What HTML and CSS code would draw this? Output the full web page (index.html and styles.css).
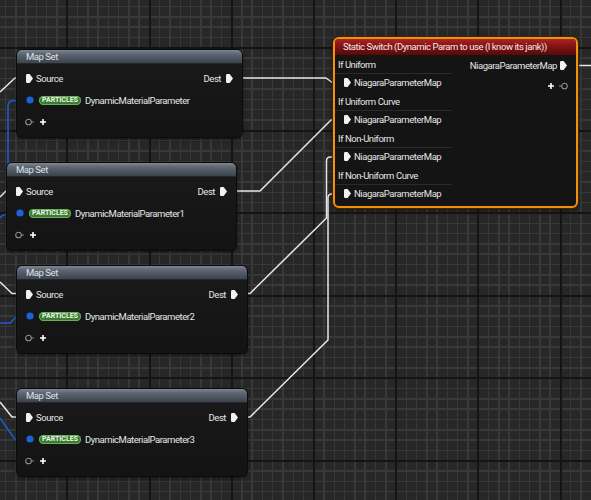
FILE: index.html
```html
<!DOCTYPE html>
<html>
<head>
<meta charset="utf-8">
<title>Niagara Graph</title>
<link rel="stylesheet" href="styles.css">
</head>
<body>
<div class="graph">
  <svg class="wires" width="591" height="500" viewBox="0 0 591 500">
    <path class="wire wire-blue" d="M8 170V106Q8 100.7 13 100.7H27"/>
    <path class="wire wire-blue" d="M0 218Q3 214 8 214H17"/>
    <path class="wire wire-blue" d="M0 323H10L17 316H27"/>
    <path class="wire wire-blue" d="M0 418L15 439.5H27"/>
    <path class="wire wire-exec" d="M0 92L15 78H26"/>
    <path class="wire wire-exec" d="M0 197L6 191H16"/>
    <path class="wire wire-exec" d="M0 282L12 293.5H26"/>
    <path class="wire wire-exec" d="M0 402L12 417H26"/>
    <path class="wire wire-exec" d="M233 78H326L333 83H344"/>
    <path class="wire wire-exec" d="M228 191H260L331 120H344"/>
    <path class="wire wire-exec" d="M237 293.5H250L326.5 218V161Q326.5 157 330.5 157H344"/>
    <path class="wire wire-exec" d="M237 417H250L328 340V198Q328 194 332 194H344"/>
    <path class="wire wire-exec" d="M567 65.5H591"/>
  </svg>

  <div class="node mapset n1">
    <div class="hdr">Map Set</div>
    <div class="body">
      <div class="row">
        <div class="pin"><svg class="ico exec-in" width="7" height="9" viewBox="0 0 7 9"><path d="M0 1.2Q0 0 1.2 0H3.6L7 4.5 3.6 9H1.2Q0 9 0 7.8Z" fill="#f2f2f2"/></svg><span>Source</span></div>
        <div class="pin"><span>Dest</span><svg class="ico exec-out" width="7" height="9" viewBox="0 0 7 9"><path d="M0 1.2Q0 0 1.2 0H3.6L7 4.5 3.6 9H1.2Q0 9 0 7.8Z" fill="#f2f2f2"/></svg></div>
      </div>
      <div class="row">
        <div class="pin"><svg class="ico dot" width="8" height="8" viewBox="0 0 8 8"><circle cx="4" cy="4" r="3.6" fill="#1d62d8"/></svg><span class="badge">PARTICLES</span><span>DynamicMaterialParameter</span></div>
      </div>
      <div class="row">
        <div class="pin"><svg class="ico addpin" width="9" height="8" viewBox="0 0 9 8"><circle cx="3.5" cy="4" r="2.8" fill="none" stroke="#8c8c8c" stroke-width="1.1"/><path d="M6.3 4H9" stroke="#8c8c8c"/></svg><svg class="ico" width="6" height="6" viewBox="0 0 6 6"><path d="M3 0V6M0 3H6" stroke="#fff" stroke-width="1.6"/></svg></div>
      </div>
    </div>
  </div>

  <div class="node mapset n2">
    <div class="hdr">Map Set</div>
    <div class="body">
      <div class="row">
        <div class="pin"><svg class="ico exec-in" width="7" height="9" viewBox="0 0 7 9"><path d="M0 1.2Q0 0 1.2 0H3.6L7 4.5 3.6 9H1.2Q0 9 0 7.8Z" fill="#f2f2f2"/></svg><span>Source</span></div>
        <div class="pin"><span>Dest</span><svg class="ico exec-out" width="7" height="9" viewBox="0 0 7 9"><path d="M0 1.2Q0 0 1.2 0H3.6L7 4.5 3.6 9H1.2Q0 9 0 7.8Z" fill="#f2f2f2"/></svg></div>
      </div>
      <div class="row">
        <div class="pin"><svg class="ico dot" width="8" height="8" viewBox="0 0 8 8"><circle cx="4" cy="4" r="3.6" fill="#1d62d8"/></svg><span class="badge">PARTICLES</span><span>DynamicMaterialParameter1</span></div>
      </div>
      <div class="row">
        <div class="pin"><svg class="ico addpin" width="9" height="8" viewBox="0 0 9 8"><circle cx="3.5" cy="4" r="2.8" fill="none" stroke="#8c8c8c" stroke-width="1.1"/><path d="M6.3 4H9" stroke="#8c8c8c"/></svg><svg class="ico" width="6" height="6" viewBox="0 0 6 6"><path d="M3 0V6M0 3H6" stroke="#fff" stroke-width="1.6"/></svg></div>
      </div>
    </div>
  </div>

  <div class="node mapset n3">
    <div class="hdr">Map Set</div>
    <div class="body">
      <div class="row">
        <div class="pin"><svg class="ico exec-in" width="7" height="9" viewBox="0 0 7 9"><path d="M0 1.2Q0 0 1.2 0H3.6L7 4.5 3.6 9H1.2Q0 9 0 7.8Z" fill="#f2f2f2"/></svg><span>Source</span></div>
        <div class="pin"><span>Dest</span><svg class="ico exec-out" width="7" height="9" viewBox="0 0 7 9"><path d="M0 1.2Q0 0 1.2 0H3.6L7 4.5 3.6 9H1.2Q0 9 0 7.8Z" fill="#f2f2f2"/></svg></div>
      </div>
      <div class="row">
        <div class="pin"><svg class="ico dot" width="8" height="8" viewBox="0 0 8 8"><circle cx="4" cy="4" r="3.6" fill="#1d62d8"/></svg><span class="badge">PARTICLES</span><span>DynamicMaterialParameter2</span></div>
      </div>
      <div class="row">
        <div class="pin"><svg class="ico addpin" width="9" height="8" viewBox="0 0 9 8"><circle cx="3.5" cy="4" r="2.8" fill="none" stroke="#8c8c8c" stroke-width="1.1"/><path d="M6.3 4H9" stroke="#8c8c8c"/></svg><svg class="ico" width="6" height="6" viewBox="0 0 6 6"><path d="M3 0V6M0 3H6" stroke="#fff" stroke-width="1.6"/></svg></div>
      </div>
    </div>
  </div>

  <div class="node mapset n4">
    <div class="hdr">Map Set</div>
    <div class="body">
      <div class="row">
        <div class="pin"><svg class="ico exec-in" width="7" height="9" viewBox="0 0 7 9"><path d="M0 1.2Q0 0 1.2 0H3.6L7 4.5 3.6 9H1.2Q0 9 0 7.8Z" fill="#f2f2f2"/></svg><span>Source</span></div>
        <div class="pin"><span>Dest</span><svg class="ico exec-out" width="7" height="9" viewBox="0 0 7 9"><path d="M0 1.2Q0 0 1.2 0H3.6L7 4.5 3.6 9H1.2Q0 9 0 7.8Z" fill="#f2f2f2"/></svg></div>
      </div>
      <div class="row">
        <div class="pin"><svg class="ico dot" width="8" height="8" viewBox="0 0 8 8"><circle cx="4" cy="4" r="3.6" fill="#1d62d8"/></svg><span class="badge">PARTICLES</span><span>DynamicMaterialParameter3</span></div>
      </div>
      <div class="row">
        <div class="pin"><svg class="ico addpin" width="9" height="8" viewBox="0 0 9 8"><circle cx="3.5" cy="4" r="2.8" fill="none" stroke="#8c8c8c" stroke-width="1.1"/><path d="M6.3 4H9" stroke="#8c8c8c"/></svg><svg class="ico" width="6" height="6" viewBox="0 0 6 6"><path d="M3 0V6M0 3H6" stroke="#fff" stroke-width="1.6"/></svg></div>
      </div>
    </div>
  </div>

  <div class="node switch">
    <div class="sw-hdr">Static Switch (Dynamic Param to use (I know its jank))</div>
    <div class="sw-body">
      <div class="sw-in">
        <div class="cat">If Uniform</div>
        <div class="in-row"><svg class="ico exec-in" width="7" height="9" viewBox="0 0 7 9"><path d="M0 1.2Q0 0 1.2 0H3.6L7 4.5 3.6 9H1.2Q0 9 0 7.8Z" fill="#f2f2f2"/></svg><span>NiagaraParameterMap</span></div>
        <div class="cat">If Uniform Curve</div>
        <div class="in-row"><svg class="ico exec-in" width="7" height="9" viewBox="0 0 7 9"><path d="M0 1.2Q0 0 1.2 0H3.6L7 4.5 3.6 9H1.2Q0 9 0 7.8Z" fill="#f2f2f2"/></svg><span>NiagaraParameterMap</span></div>
        <div class="cat">If Non-Uniform</div>
        <div class="in-row"><svg class="ico exec-in" width="7" height="9" viewBox="0 0 7 9"><path d="M0 1.2Q0 0 1.2 0H3.6L7 4.5 3.6 9H1.2Q0 9 0 7.8Z" fill="#f2f2f2"/></svg><span>NiagaraParameterMap</span></div>
        <div class="cat">If Non-Uniform Curve</div>
        <div class="in-row"><svg class="ico exec-in" width="7" height="9" viewBox="0 0 7 9"><path d="M0 1.2Q0 0 1.2 0H3.6L7 4.5 3.6 9H1.2Q0 9 0 7.8Z" fill="#f2f2f2"/></svg><span>NiagaraParameterMap</span></div>
      </div>
      <div class="sw-out">
        <div class="out-row"><span>NiagaraParameterMap</span><svg class="ico exec-out-sw" width="7" height="9" viewBox="0 0 7 9"><path d="M0 1.2Q0 0 1.2 0H3.6L7 4.5 3.6 9H1.2Q0 9 0 7.8Z" fill="#f2f2f2"/></svg></div>
        <div class="add-row"><svg class="ico" width="6" height="6" viewBox="0 0 6 6"><path d="M3 0V6M0 3H6" stroke="#fff" stroke-width="1.6"/></svg><svg class="ico addpin-out" width="9" height="8" viewBox="0 0 9 8"><path d="M0 4H2.7" stroke="#8c8c8c"/><circle cx="5.5" cy="4" r="2.8" fill="none" stroke="#8c8c8c" stroke-width="1.1"/></svg></div>
      </div>
    </div>
  </div>
</div>
</body>
</html>
```

FILE: styles.css
```css
* { box-sizing: border-box; }

html, body {
  margin: 0;
  padding: 0;
  background: #272727;
}

body {
  font-family: Roboto, "Liberation Sans", sans-serif;
  font-size: 9.5px;
  letter-spacing: -0.45px;
  color: #e6e6e6;
}

.graph {
  position: relative;
  width: 591px;
  height: 500px;
  overflow: hidden;
  background-color: #272727;
  background-image:
    repeating-linear-gradient(90deg, transparent 0 66.5px, #141414 66.5px 68.5px, transparent 68.5px 82.2px),
    repeating-linear-gradient(180deg, transparent 0 47px, #141414 47px 49px, transparent 49px 82.6px),
    repeating-linear-gradient(90deg, transparent 0 4.85px, #383838 4.85px 6.35px, transparent 6.35px 10.275px),
    repeating-linear-gradient(180deg, transparent 0 5.7px, #383838 5.7px 7.2px, transparent 7.2px 10.325px);
}

.wires {
  position: absolute;
  left: 0;
  top: 0;
}

.wire {
  fill: none;
  stroke-width: 1.5;
  stroke-linejoin: round;
}

.wire-exec { stroke: #e8e8e8; }
.wire-blue { stroke: #1d5fd3; }

.node {
  position: absolute;
  background: linear-gradient(180deg, #1a1a1a 0%, #131313 100%);
  border-radius: 5px;
  box-shadow: 0 0 0 1px #0b0b0b, 0 2px 5px rgba(0, 0, 0, 0.55);
  overflow: hidden;
}

.n1 { left: 17px; top: 50px; width: 225px; }
.n2 { left: 7px; top: 163px; width: 229px; }
.n3 { left: 17px; top: 266px; width: 230px; }
.n4 { left: 17px; top: 389px; width: 230px; }

.hdr {
  height: 14px;
  line-height: 14px;
  padding-left: 9px;
  color: #dde2e8;
  background: linear-gradient(180deg, #7d8692 0%, #5e6772 30%, #4a525c 70%, #3c434c 100%);
  border-bottom: 1px solid #22272d;
}

.body {
  padding: 3px 9px 4px 9px;
}

.row {
  height: 22px;
  display: flex;
  align-items: center;
  justify-content: space-between;
}

.pin {
  display: flex;
  align-items: center;
}

.ico {
  display: block;
  flex: none;
}

.exec-in { margin-right: 3px; }
.exec-out { margin-left: 5px; }
.dot { margin-right: 5px; }
.addpin { margin-right: 6px; margin-left: -1px; }

.badge {
  display: inline-flex;
  align-items: center;
  height: 9px;
  padding: 0 3px;
  margin-right: 4px;
  border-radius: 4.5px;
  background: #3b7c33;
  box-shadow: inset 0 0 0 1px #66b157;
  color: #eef7ea;
  font-size: 7px;
  font-weight: 700;
  letter-spacing: 0;
  line-height: 9px;
}

.switch {
  left: 333px;
  top: 37px;
  width: 245px;
  height: 171px;
  border: 2px solid #f0900c;
  border-radius: 6px;
  background: #141414;
  box-shadow: 0 0 0 1px #3a2508, 0 2px 5px rgba(0, 0, 0, 0.55);
}

.sw-hdr {
  height: 16px;
  line-height: 16px;
  padding-left: 8px;
  color: #f2e9e9;
  background: linear-gradient(180deg, #a82525 0%, #8c1616 35%, #6a0e0e 75%, #560a0a 100%);
  white-space: nowrap;
}

.sw-body {
  display: flex;
  justify-content: space-between;
}

.sw-in {
  width: 117px;
  display: flex;
  flex-direction: column;
}

.cat {
  height: 18.5px;
  line-height: 19px;
  padding-left: 3px;
  border-bottom: 1px solid #2a2a2a;
}

.in-row {
  height: 18.5px;
  display: flex;
  align-items: center;
  padding-left: 9px;
}

.sw-out {
  padding-right: 9px;
  display: flex;
  flex-direction: column;
  align-items: flex-end;
}

.out-row {
  height: 20px;
  display: flex;
  align-items: center;
}

.exec-out-sw { margin-left: 3px; }

.add-row {
  height: 22px;
  display: flex;
  align-items: center;
}

.addpin-out { margin-left: 5px; margin-right: -1px; }
```
